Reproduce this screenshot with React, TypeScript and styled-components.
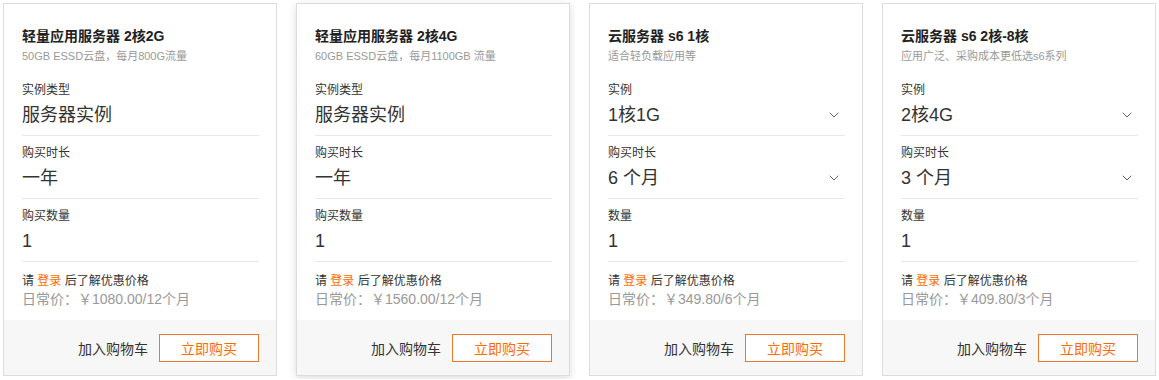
import { FC } from "react"
import styled, { createGlobalStyle } from "styled-components"
import { ChevronDown } from "lucide-react"

const orange = "#ff6a00"

const GlobalStyle = createGlobalStyle`
  body {
    margin: 0;
    background: #fff;
    font-family: "Liberation Sans", "Noto Sans CJK SC", sans-serif;
    color: #333;
  }
`

const Page = styled.div`
  display: flex;
  gap: 19px;
  padding: 3px;
`

const Card = styled.div<{ $active?: boolean }>`
  width: 274px;
  flex: none;
  box-sizing: border-box;
  border: 1px solid #dcdcdc;
  background: #fff;
  display: flex;
  flex-direction: column;
  box-shadow: ${(p) => (p.$active ? "0 2px 8px rgba(0,0,0,0.14)" : "none")};
`

const Body = styled.div`
  height: 316px;
  box-sizing: border-box;
  padding: 22px 17px 0 18px;
`

const Title = styled.div`
  font-size: 14px;
  line-height: 20px;
  font-weight: bold;
  color: #222;
`

const Subtitle = styled.div`
  font-size: 11px;
  line-height: 16px;
  color: #999;
  margin-top: 2px;
  margin-bottom: 9px;
`

const Field = styled.div`
  padding: 8px 0 7px;
  border-bottom: 1px solid #e8e8e8;
`

const Label = styled.div`
  font-size: 12px;
  line-height: 18px;
  color: #333;
`

const Value = styled.div`
  margin-top: 3px;
  font-size: 18px;
  line-height: 26px;
  color: #333;
  display: flex;
  align-items: center;
  justify-content: space-between;

  svg {
    color: #666;
    margin-right: 3px;
  }
`

const Login = styled.div`
  margin-top: 10px;
  font-size: 12px;
  line-height: 18px;
  color: #333;

  span {
    color: ${orange};
  }
`

const Price = styled.div`
  font-size: 14px;
  line-height: 18px;
  color: #999;
`

const Footer = styled.div`
  height: 55px;
  background: #f7f7f7;
  display: flex;
  align-items: center;
  justify-content: flex-end;
  gap: 11px;
  padding-right: 17px;
`

const CartLink = styled.span`
  font-size: 14px;
  color: #333;
`

const BuyButton = styled.button`
  width: 100px;
  height: 28px;
  border: 1px solid #e8792f;
  background: #fff;
  color: ${orange};
  font-family: inherit;
  font-size: 14px;
  padding: 0;
`

interface Product {
  title: string
  subtitle: string
  fields: { label: string; value: string; select?: boolean }[]
  price: string
  active?: boolean
}

const products: Product[] = [
  {
    title: "轻量应用服务器 2核2G",
    subtitle: "50GB ESSD云盘，每月800G流量",
    fields: [
      { label: "实例类型", value: "服务器实例" },
      { label: "购买时长", value: "一年" },
      { label: "购买数量", value: "1" },
    ],
    price: "日常价：￥1080.00/12个月",
  },
  {
    title: "轻量应用服务器 2核4G",
    subtitle: "60GB ESSD云盘，每月1100GB 流量",
    fields: [
      { label: "实例类型", value: "服务器实例" },
      { label: "购买时长", value: "一年" },
      { label: "购买数量", value: "1" },
    ],
    price: "日常价：￥1560.00/12个月",
    active: true,
  },
  {
    title: "云服务器 s6 1核",
    subtitle: "适合轻负载应用等",
    fields: [
      { label: "实例", value: "1核1G", select: true },
      { label: "购买时长", value: "6 个月", select: true },
      { label: "数量", value: "1" },
    ],
    price: "日常价：￥349.80/6个月",
  },
  {
    title: "云服务器 s6 2核-8核",
    subtitle: "应用广泛、采购成本更低选s6系列",
    fields: [
      { label: "实例", value: "2核4G", select: true },
      { label: "购买时长", value: "3 个月", select: true },
      { label: "数量", value: "1" },
    ],
    price: "日常价：￥409.80/3个月",
  },
]

const ProductCard: FC<{ product: Product }> = ({ product }) => (
  <Card $active={product.active}>
    <Body>
      <Title>{product.title}</Title>
      <Subtitle>{product.subtitle}</Subtitle>
      {product.fields.map((f) => (
        <Field key={f.label}>
          <Label>{f.label}</Label>
          <Value>
            {f.value}
            {f.select && <ChevronDown size={16} strokeWidth={1.5} />}
          </Value>
        </Field>
      ))}
      <Login>
        请 <span>登录</span> 后了解优惠价格
      </Login>
      <Price>{product.price}</Price>
    </Body>
    <Footer>
      <CartLink>加入购物车</CartLink>
      <BuyButton>立即购买</BuyButton>
    </Footer>
  </Card>
)

export default function App() {
  return (
    <>
      <GlobalStyle />
      <Page>
        {products.map((p) => (
          <ProductCard key={p.title} product={p} />
        ))}
      </Page>
    </>
  )
}
